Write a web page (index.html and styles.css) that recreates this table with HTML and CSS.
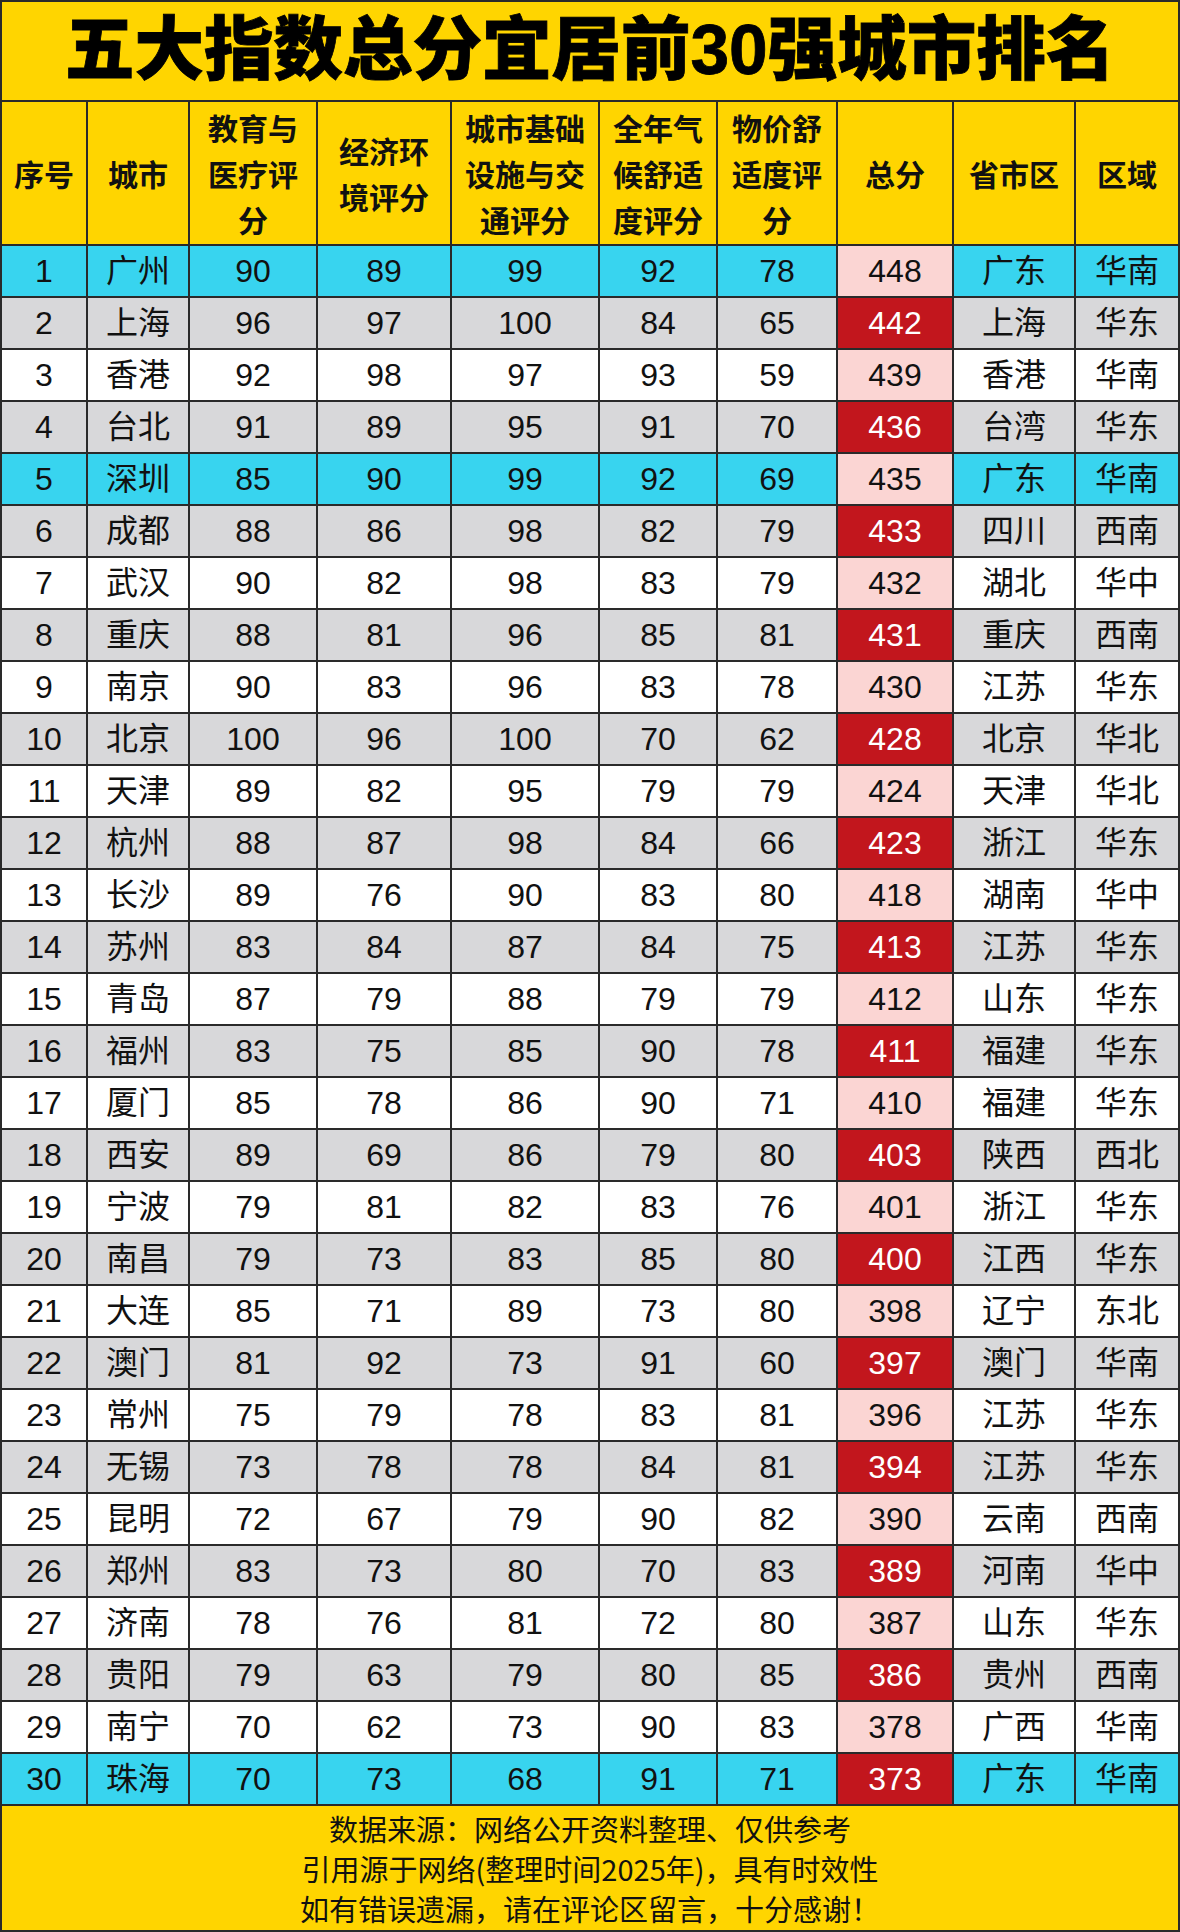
FILE: index.html
```html
<!DOCTYPE html>
<html lang="zh-CN">
<head>
<meta charset="utf-8">
<title>五大指数总分宜居前30强城市排名</title>
<link rel="stylesheet" href="styles.css">
</head>
<body>
<table class="board">
  <colgroup>
    <col class="c-rank"><col class="c-city"><col class="c-edu"><col class="c-eco"><col class="c-infra">
    <col class="c-climate"><col class="c-price"><col class="c-total"><col class="c-prov"><col class="c-region">
  </colgroup>
  <thead>
    <tr class="title-row"><th colspan="10" class="title">五大指数总分宜居前30强城市排名</th></tr>
    <tr class="head-row">
      <th>序号</th>
      <th>城市</th>
      <th>教育与<br>医疗评<br>分</th>
      <th>经济环<br>境评分</th>
      <th>城市基础<br>设施与交<br>通评分</th>
      <th>全年气<br>候舒适<br>度评分</th>
      <th>物价舒<br>适度评<br>分</th>
      <th>总分</th>
      <th>省市区</th>
      <th>区域</th>
    </tr>
  </thead>
  <tbody>
    <tr class="hl"><td>1</td><td>广州</td><td>90</td><td>89</td><td>99</td><td>92</td><td>78</td><td class="tot light">448</td><td>广东</td><td>华南</td></tr>
    <tr class="gray"><td>2</td><td>上海</td><td>96</td><td>97</td><td>100</td><td>84</td><td>65</td><td class="tot dark">442</td><td>上海</td><td>华东</td></tr>
    <tr><td>3</td><td>香港</td><td>92</td><td>98</td><td>97</td><td>93</td><td>59</td><td class="tot light">439</td><td>香港</td><td>华南</td></tr>
    <tr class="gray"><td>4</td><td>台北</td><td>91</td><td>89</td><td>95</td><td>91</td><td>70</td><td class="tot dark">436</td><td>台湾</td><td>华东</td></tr>
    <tr class="hl"><td>5</td><td>深圳</td><td>85</td><td>90</td><td>99</td><td>92</td><td>69</td><td class="tot light">435</td><td>广东</td><td>华南</td></tr>
    <tr class="gray"><td>6</td><td>成都</td><td>88</td><td>86</td><td>98</td><td>82</td><td>79</td><td class="tot dark">433</td><td>四川</td><td>西南</td></tr>
    <tr><td>7</td><td>武汉</td><td>90</td><td>82</td><td>98</td><td>83</td><td>79</td><td class="tot light">432</td><td>湖北</td><td>华中</td></tr>
    <tr class="gray"><td>8</td><td>重庆</td><td>88</td><td>81</td><td>96</td><td>85</td><td>81</td><td class="tot dark">431</td><td>重庆</td><td>西南</td></tr>
    <tr><td>9</td><td>南京</td><td>90</td><td>83</td><td>96</td><td>83</td><td>78</td><td class="tot light">430</td><td>江苏</td><td>华东</td></tr>
    <tr class="gray"><td>10</td><td>北京</td><td>100</td><td>96</td><td>100</td><td>70</td><td>62</td><td class="tot dark">428</td><td>北京</td><td>华北</td></tr>
    <tr><td>11</td><td>天津</td><td>89</td><td>82</td><td>95</td><td>79</td><td>79</td><td class="tot light">424</td><td>天津</td><td>华北</td></tr>
    <tr class="gray"><td>12</td><td>杭州</td><td>88</td><td>87</td><td>98</td><td>84</td><td>66</td><td class="tot dark">423</td><td>浙江</td><td>华东</td></tr>
    <tr><td>13</td><td>长沙</td><td>89</td><td>76</td><td>90</td><td>83</td><td>80</td><td class="tot light">418</td><td>湖南</td><td>华中</td></tr>
    <tr class="gray"><td>14</td><td>苏州</td><td>83</td><td>84</td><td>87</td><td>84</td><td>75</td><td class="tot dark">413</td><td>江苏</td><td>华东</td></tr>
    <tr><td>15</td><td>青岛</td><td>87</td><td>79</td><td>88</td><td>79</td><td>79</td><td class="tot light">412</td><td>山东</td><td>华东</td></tr>
    <tr class="gray"><td>16</td><td>福州</td><td>83</td><td>75</td><td>85</td><td>90</td><td>78</td><td class="tot dark">411</td><td>福建</td><td>华东</td></tr>
    <tr><td>17</td><td>厦门</td><td>85</td><td>78</td><td>86</td><td>90</td><td>71</td><td class="tot light">410</td><td>福建</td><td>华东</td></tr>
    <tr class="gray"><td>18</td><td>西安</td><td>89</td><td>69</td><td>86</td><td>79</td><td>80</td><td class="tot dark">403</td><td>陕西</td><td>西北</td></tr>
    <tr><td>19</td><td>宁波</td><td>79</td><td>81</td><td>82</td><td>83</td><td>76</td><td class="tot light">401</td><td>浙江</td><td>华东</td></tr>
    <tr class="gray"><td>20</td><td>南昌</td><td>79</td><td>73</td><td>83</td><td>85</td><td>80</td><td class="tot dark">400</td><td>江西</td><td>华东</td></tr>
    <tr><td>21</td><td>大连</td><td>85</td><td>71</td><td>89</td><td>73</td><td>80</td><td class="tot light">398</td><td>辽宁</td><td>东北</td></tr>
    <tr class="gray"><td>22</td><td>澳门</td><td>81</td><td>92</td><td>73</td><td>91</td><td>60</td><td class="tot dark">397</td><td>澳门</td><td>华南</td></tr>
    <tr><td>23</td><td>常州</td><td>75</td><td>79</td><td>78</td><td>83</td><td>81</td><td class="tot light">396</td><td>江苏</td><td>华东</td></tr>
    <tr class="gray"><td>24</td><td>无锡</td><td>73</td><td>78</td><td>78</td><td>84</td><td>81</td><td class="tot dark">394</td><td>江苏</td><td>华东</td></tr>
    <tr><td>25</td><td>昆明</td><td>72</td><td>67</td><td>79</td><td>90</td><td>82</td><td class="tot light">390</td><td>云南</td><td>西南</td></tr>
    <tr class="gray"><td>26</td><td>郑州</td><td>83</td><td>73</td><td>80</td><td>70</td><td>83</td><td class="tot dark">389</td><td>河南</td><td>华中</td></tr>
    <tr><td>27</td><td>济南</td><td>78</td><td>76</td><td>81</td><td>72</td><td>80</td><td class="tot light">387</td><td>山东</td><td>华东</td></tr>
    <tr class="gray"><td>28</td><td>贵阳</td><td>79</td><td>63</td><td>79</td><td>80</td><td>85</td><td class="tot dark">386</td><td>贵州</td><td>西南</td></tr>
    <tr><td>29</td><td>南宁</td><td>70</td><td>62</td><td>73</td><td>90</td><td>83</td><td class="tot light">378</td><td>广西</td><td>华南</td></tr>
    <tr class="hl"><td>30</td><td>珠海</td><td>70</td><td>73</td><td>68</td><td>91</td><td>71</td><td class="tot dark">373</td><td>广东</td><td>华南</td></tr>
  </tbody>
  <tfoot>
    <tr class="foot-row">
      <td colspan="10" class="note">数据来源：网络公开资料整理、仅供参考<br>引用源于网络(整理时间2025年)，具有时效性<br>如有错误遗漏，请在评论区留言，十分感谢！</td>
    </tr>
  </tfoot>
</table>
</body>
</html>
```
FILE: styles.css
```css
html, body {
  margin: 0;
  padding: 0;
  background: #ffffff;
}

.board {
  width: 1180px;
  table-layout: fixed;
  border-collapse: separate;
  border-spacing: 0;
  border-left: 2px solid #2a2a2a;
  border-top: 2px solid #2a2a2a;
  font-family: "Liberation Sans", "Noto Sans CJK SC", sans-serif;
  color: #111111;
}

.c-rank { width: 86px; }
.c-city { width: 102px; }
.c-edu { width: 128px; }
.c-eco { width: 134px; }
.c-infra { width: 148px; }
.c-climate { width: 118px; }
.c-price { width: 120px; }
.c-total { width: 116px; }
.c-prov { width: 122px; }
.c-region { width: 104px; }

.board th,
.board td {
  box-sizing: border-box;
  padding: 0;
  text-align: center;
  vertical-align: middle;
  border-right: 2px solid #2a2a2a;
  border-bottom: 2px solid #2a2a2a;
}

.board th.title {
  height: 100px;
  background: #ffd500;
  font-family: "Liberation Sans", "Noto Sans CJK SC", sans-serif;
  font-size: 69.5px;
  font-weight: 900;
  line-height: 1;
  -webkit-text-stroke: 0.8px #000;
  color: #000;
}

.head-row th {
  height: 144px;
  background: #ffd500;
  font-family: "Noto Sans CJK SC", sans-serif;
  font-size: 30px;
  font-weight: 700;
  line-height: 46px;
  color: #111;
}

.board tbody td {
  height: 52px;
  background: #ffffff;
  font-size: 32px;
  line-height: 1;
}

.board tbody tr.gray td { background: #d8d8da; }
.board tbody tr.hl td { background: #38d4ef; }

.board tbody td.tot.light { background: #fbd5d3; }
.board tbody td.tot.dark { background: #c2161d; color: #ffffff; }

.note {
  height: 126px;
  background: #ffd500;
  font-family: "Noto Sans CJK SC", sans-serif;
  font-size: 29px;
  line-height: 40px;
  color: #111;
}
```
